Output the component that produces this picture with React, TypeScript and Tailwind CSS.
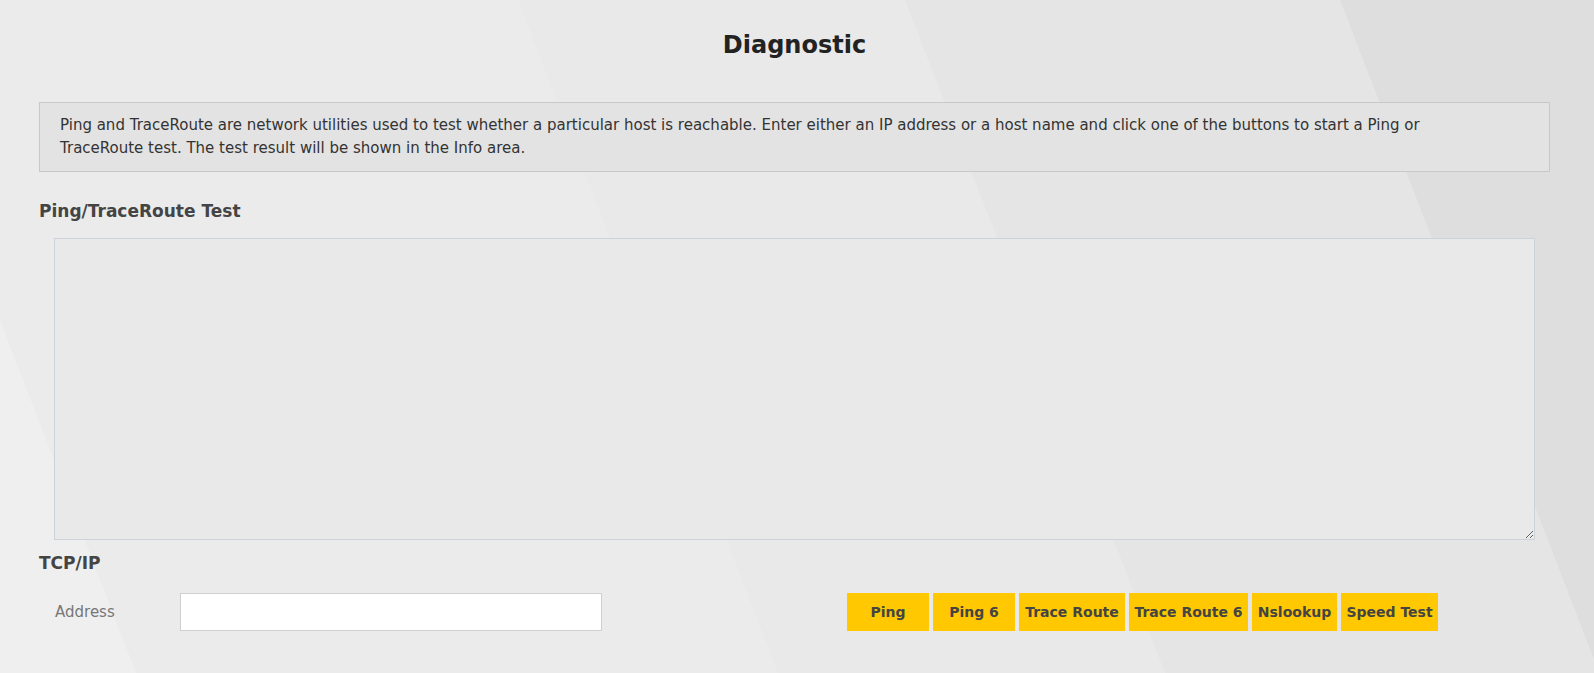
import React from "react";

const font = { fontFamily: '"DejaVu Sans", "Open Sans", sans-serif' };

function Background() {
    return (
        <svg className="absolute inset-0 h-full w-full" viewBox="0 0 1594 673" preserveAspectRatio="none">
            <rect width="1594" height="673" fill="#ebebeb" />
            <polygon points="0,320 0,673 136,673" fill="#efefef" />
            <polygon points="518,0 905,0 1165,673 778,673" fill="#e9e9e9" />
            <polygon points="905,0 1340,0 1599,673 1165,673" fill="#e5e5e5" />
            <polygon points="1340,0 1594,0 1594,673 1599,673" fill="#dedede" />
        </svg>
    );
}

const buttons = [
    { label: "Ping", w: "w-[82px]" },
    { label: "Ping 6", w: "w-[82px]" },
    { label: "Trace Route", w: "w-[106px]" },
    { label: "Trace Route 6", w: "w-[119px]" },
    { label: "Nslookup", w: "w-[85px]" },
    { label: "Speed Test", w: "w-[97px]" },
];

export default function App() {
    return (
        <div className="relative h-[673px] w-[1594px] overflow-hidden" style={font}>
            <Background />
            <div className="relative pl-[39px] pr-[44px] pt-[28px]">
                <h1 className="text-center text-[24px] font-bold leading-[34px] text-[#222]">Diagnostic</h1>

                <div className="mt-[40px] border border-[#c8c8c8] bg-[#e3e3e3] py-[11px] pl-[20px] pr-[60px] text-[15px] leading-[23px] text-[#333]">
                    Ping and TraceRoute are network utilities used to test whether a particular host is reachable. Enter either an IP address or a host name and click one of the buttons to start a Ping or TraceRoute test. The test result will be shown in the Info area.
                </div>

                <h2 className="mt-[28px] text-[17px] font-bold leading-[22px] text-[#444]">Ping/TraceRoute Test</h2>

                <div className="mx-[15px] mt-[16px]">
                    <textarea className="block h-[302px] w-full resize-y border border-[#cdd2d9] bg-[#e9e9e9] outline-none" />
                </div>

                <h2 className="mt-[12px] text-[17px] font-bold leading-[22px] text-[#444]">TCP/IP</h2>

                <div className="mt-[19px] flex items-center">
                    <label className="w-[141px] pl-[16px] text-[15px] text-[#777]">Address</label>
                    <input className="h-[38px] w-[422px] border border-[#cfcfcf] bg-white px-2 outline-none" />
                    <div className="ml-[245px] flex gap-[4px]">
                        {buttons.map((b) => (
                            <button
                                key={b.label}
                                className={`${b.w} h-[38px] bg-[#ffc800] text-[14px] font-bold text-[#444]`}
                            >
                                {b.label}
                            </button>
                        ))}
                    </div>
                </div>
            </div>
        </div>
    );
}
